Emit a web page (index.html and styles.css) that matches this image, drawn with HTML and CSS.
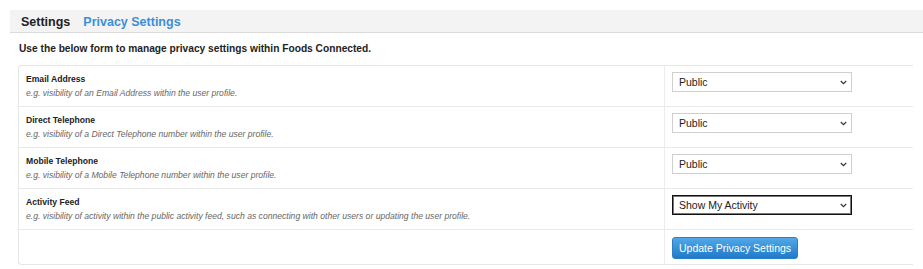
FILE: index.html
```html
<!DOCTYPE html>
<html>
<head>
  <title>Privacy Settings</title>
  <link rel="stylesheet" href="styles.css">
</head>
<body>
  <div class="page-header">
    <span class="crumb">Settings</span>
    <span class="crumb-active">Privacy Settings</span>
  </div>

  <p class="intro">Use the below form to manage privacy settings within Foods Connected.</p>

  <form class="privacy-form">
    <table class="privacy-table">
      <tr>
        <td class="label-cell">
          <div class="field-name">Email Address</div>
          <div class="field-hint">e.g. visibility of an Email Address within the user profile.</div>
        </td>
        <td class="input-cell">
          <select name="email"><option>Public</option><option>Private</option></select>
        </td>
      </tr>
      <tr>
        <td class="label-cell">
          <div class="field-name">Direct Telephone</div>
          <div class="field-hint">e.g. visibility of a Direct Telephone number within the user profile.</div>
        </td>
        <td class="input-cell">
          <select name="directPhone"><option>Public</option><option>Private</option></select>
        </td>
      </tr>
      <tr>
        <td class="label-cell">
          <div class="field-name">Mobile Telephone</div>
          <div class="field-hint">e.g. visibility of a Mobile Telephone number within the user profile.</div>
        </td>
        <td class="input-cell">
          <select name="mobilePhone"><option>Public</option><option>Private</option></select>
        </td>
      </tr>
      <tr>
        <td class="label-cell">
          <div class="field-name">Activity Feed</div>
          <div class="field-hint">e.g. visibility of activity within the public activity feed, such as connecting with other users or updating the user profile.</div>
        </td>
        <td class="input-cell">
          <select name="activity" class="focused"><option>Show My Activity</option><option>Hide My Activity</option></select>
        </td>
      </tr>
      <tr class="last-row">
        <td class="label-cell"></td>
        <td class="input-cell">
          <button type="submit" class="btn-primary">Update Privacy Settings</button>
        </td>
      </tr>
    </table>
  </form>
</body>
</html>
```

FILE: styles.css
```css
body {
  font-family: "Liberation Sans", Arial, sans-serif;
  margin: 10px 0 0 10px;
  color: #222;
}
.page-header {
  background: #f3f3f3;
  border-bottom: 1px solid #dcdcdc;
  height: 22px;
  padding: 1px 0 0 11px;
  box-sizing: border-box;
  height: 23px;
  display: flex;
  align-items: center;
  gap: 13px;
  font-size: 12.5px;
  font-weight: bold;
}
.crumb {
  color: #222;
}
.crumb-active {
  color: #3b8fd9;
}
.intro {
  font-size: 10.2px;
  font-weight: bold;
  margin: 10px 0 0 9px;
  height: 22px;
  line-height: 12px;
}
.privacy-form {
  margin-left: 8px;
  width: 895px;
}
.privacy-table {
  width: 100%;
  border-collapse: separate;
  border-spacing: 0;
  border: 1px solid #e6e6e6;
  border-right: none;
  border-radius: 4px 0 0 4px;
}
.privacy-table tr {
  height: 41px;
}
.privacy-table td {
  border-bottom: 1px solid #e9e9e9;
  vertical-align: top;
  padding: 0;
}
.privacy-table tr.last-row {
  height: 34px;
}
.privacy-table tr.last-row td {
  border-bottom: none;
}
.label-cell {
  width: 638px;
  padding-left: 7px !important;
  border-right: 1px solid #ececec;
}
.field-name {
  font-size: 8.6px;
  font-weight: bold;
  margin-top: 8px;
  line-height: 11px;
}
.field-hint {
  font-size: 8.6px;
  font-style: italic;
  color: #666;
  margin-top: 3px;
  line-height: 10px;
}
.input-cell {
  padding: 6px 0 0 7px !important;
}
select {
  -webkit-appearance: none;
  appearance: none;
  width: 180px;
  height: 20px;
  font-family: "Liberation Sans", Arial, sans-serif;
  font-size: 10.5px;
  color: #222;
  border: 1px solid #cfcfcf;
  border-radius: 0;
  padding: 0 6px;
  background: #fff url("data:image/svg+xml,%3Csvg xmlns='http://www.w3.org/2000/svg' width='7' height='5' viewBox='0 0 7 5'%3E%3Cpath d='M0.8 1 L3.5 3.6 L6.2 1' fill='none' stroke='%23333' stroke-width='1.2'/%3E%3C/svg%3E") no-repeat right 4px center;
}
select.focused {
  border: 1px solid #111;
  box-shadow: inset 0 0 0 1px #777;
}
.btn-primary {
  margin-top: 1px;
  height: 22px;
  padding: 0 6px;
  font-family: "Liberation Sans", Arial, sans-serif;
  font-size: 10.5px;
  color: #fff;
  border: 1px solid #2b7fc2;
  border-radius: 3px;
  background: linear-gradient(#52a8e6, #1f7acb);
}
```
